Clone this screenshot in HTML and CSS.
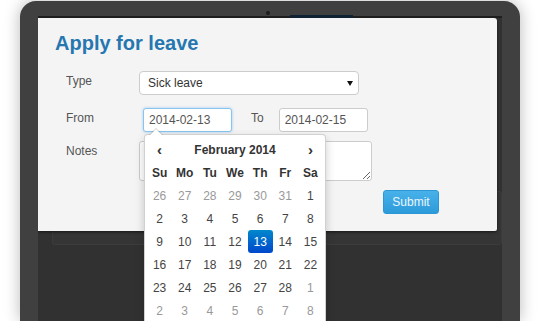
FILE: index.html
```html
<!DOCTYPE html>
<html lang="en">
<head>
  <meta charset="UTF-8">
  <title>Apply for leave</title>
  <link rel="stylesheet" href="styles.css">
</head>
<body>

  <!-- Tablet frame -->
  <div class="device">
    <span class="camera"></span>
    <span class="notch"></span>

    <div class="screen">
      <div class="panel">
        <h1 class="title">Apply for leave</h1>

        <form class="leave-form">
          <div class="row">
            <label class="label">Type</label>
            <div class="select">
              <span>Sick leave</span>
              <span class="select-arrow"></span>
            </div>
          </div>

          <div class="row row-dates">
            <label class="label">From</label>
            <div class="date-field">
              <input class="input input-focus" type="text" value="2014-02-13">

              <!-- Calendario abierto -->
              <div class="datepicker">
                <div class="dp-grid">
                  <div class="dp-nav">&lsaquo;</div>
                  <div class="dp-switch">February 2014</div>
                  <div class="dp-nav">&rsaquo;</div>

                  <div class="dp-dow">Su</div><div class="dp-dow">Mo</div><div class="dp-dow">Tu</div><div class="dp-dow">We</div><div class="dp-dow">Th</div><div class="dp-dow">Fr</div><div class="dp-dow">Sa</div>

                  <div class="dp-day old">26</div><div class="dp-day old">27</div><div class="dp-day old">28</div><div class="dp-day old">29</div><div class="dp-day old">30</div><div class="dp-day old">31</div><div class="dp-day">1</div>
                  <div class="dp-day">2</div><div class="dp-day">3</div><div class="dp-day">4</div><div class="dp-day">5</div><div class="dp-day">6</div><div class="dp-day">7</div><div class="dp-day">8</div>
                  <div class="dp-day">9</div><div class="dp-day">10</div><div class="dp-day">11</div><div class="dp-day">12</div><div class="dp-day active">13</div><div class="dp-day">14</div><div class="dp-day">15</div>
                  <div class="dp-day">16</div><div class="dp-day">17</div><div class="dp-day">18</div><div class="dp-day">19</div><div class="dp-day">20</div><div class="dp-day">21</div><div class="dp-day">22</div>
                  <div class="dp-day">23</div><div class="dp-day">24</div><div class="dp-day">25</div><div class="dp-day">26</div><div class="dp-day">27</div><div class="dp-day">28</div><div class="dp-day new">1</div>
                  <div class="dp-day new">2</div><div class="dp-day new">3</div><div class="dp-day new">4</div><div class="dp-day new">5</div><div class="dp-day new">6</div><div class="dp-day new">7</div><div class="dp-day new">8</div>
                </div>
              </div>
            </div>
            <label class="label label-to">To</label>
            <input class="input" type="text" value="2014-02-15">
          </div>

          <div class="row row-notes">
            <label class="label">Notes</label>
            <textarea class="notes"></textarea>
          </div>

          <div class="row row-actions">
            <button class="submit" type="button">Submit</button>
          </div>
        </form>
      </div>

      <!-- Tarjeta de fondo -->
      <div class="back-card"></div>
    </div>
  </div>

</body>
</html>
```

FILE: styles.css
```css
body {
  margin: 0;
  padding: 0;
  height: 321px;
  background: #fff;
  font-family: 'Liberation Sans', Arial, sans-serif;
  overflow: hidden;
}

.device {
  position: relative;
  width: 464px;
  height: 305px;
  margin: 1px 0 0 20px;
  padding: 15px 18px 0 18px;
  background: #404040;
  border-radius: 16px 16px 0 0;
  box-shadow: 0 0 16px rgba(0, 0, 0, 0.28);
}

.camera {
  position: absolute;
  left: 246px;
  top: 10px;
  width: 4px;
  height: 4px;
  border-radius: 50%;
  background: #1c1c1c;
}

.notch {
  position: absolute;
  left: 270px;
  top: 14px;
  width: 63px;
  height: 3px;
  background: #0e2233;
}

.screen {
  height: 100%;
  box-sizing: border-box;
  background: #313131;
  border-top: 2px solid #1e1e1e;
  overflow: hidden;
}

.panel {
  position: relative;
  z-index: 2;
  width: 459px;
  box-sizing: border-box;
  padding: 13px 17px 17px 17px;
  background: #f4f4f4;
  border-radius: 0 3px 2px 0;
  box-shadow: 0 1px 3px rgba(0, 0, 0, 0.6);
}

.title {
  margin: 0;
  font-size: 20px;
  line-height: 24px;
  font-weight: bold;
  color: #2677b0;
}

.leave-form {
  margin-top: 16px;
  padding-left: 11px;
}

.row {
  display: flex;
  align-items: flex-start;
}

.row-dates { margin-top: 13px; }
.row-notes { margin-top: 9px; }
.row-actions { margin-top: 9px; }

.label {
  width: 73px;
  flex-shrink: 0;
  padding-top: 2px;
  font-size: 12px;
  line-height: 16px;
  color: #555;
}

.label-to {
  width: auto;
  margin: 0 15px 0 19px;
}

.select {
  width: 220px;
  height: 24px;
  box-sizing: border-box;
  padding: 0 4px 0 8px;
  display: flex;
  align-items: center;
  justify-content: space-between;
  background: #fff;
  border: 1px solid #ccc;
  border-radius: 4px;
  font-size: 12px;
  color: #333;
}

.select-arrow {
  width: 0;
  height: 0;
  border-left: 3.5px solid transparent;
  border-right: 3.5px solid transparent;
  border-top: 5px solid #111;
  margin-right: 1px;
}

.date-field {
  position: relative;
  margin-left: 4px;
}

.input {
  display: block;
  width: 89px;
  height: 24px;
  box-sizing: border-box;
  margin: 0;
  padding: 0 5px;
  background: #fff;
  border: 1px solid #ccc;
  border-radius: 3px;
  font-family: 'Liberation Sans', Arial, sans-serif;
  font-size: 12px;
  color: #555;
  outline: none;
}

.input-focus {
  border-color: #8ac4ec;
  box-shadow: 0 0 3px rgba(102, 175, 233, 0.6);
}

.notes {
  display: block;
  width: 233px;
  height: 40px;
  box-sizing: border-box;
  margin: 0;
  background: #fff;
  border: 1px solid #ccc;
  border-radius: 3px;
  font-family: 'Liberation Sans', Arial, sans-serif;
}

.submit {
  margin-left: 317px;
  width: 56px;
  height: 24px;
  padding: 0;
  background: linear-gradient(#48b1ea, #2c9bd9);
  border: 1px solid #2b97d5;
  border-radius: 3px;
  font-family: 'Liberation Sans', Arial, sans-serif;
  font-size: 12px;
  color: #eaf6fd;
}

.datepicker {
  position: absolute;
  left: 1px;
  top: 26px;
  z-index: 10;
  padding: 3px 2px;
  background: #fff;
  border: 1px solid rgba(0, 0, 0, 0.18);
  border-radius: 4px;
  box-shadow: 0 4px 10px rgba(0, 0, 0, 0.2);
}

.datepicker::before {
  content: '';
  position: absolute;
  top: -7px;
  left: 4px;
  border-left: 7px solid transparent;
  border-right: 7px solid transparent;
  border-bottom: 7px solid rgba(0, 0, 0, 0.18);
}

.datepicker::after {
  content: '';
  position: absolute;
  top: -6px;
  left: 5px;
  border-left: 6px solid transparent;
  border-right: 6px solid transparent;
  border-bottom: 6px solid #fff;
}

.dp-grid {
  width: 176px;
  display: grid;
  grid-template-columns: repeat(7, 1fr);
  grid-auto-rows: 23px;
  font-size: 12px;
  color: #444;
  text-align: center;
}

.dp-grid > div {
  display: flex;
  align-items: center;
  justify-content: center;
}

.dp-nav {
  font-size: 15px;
  font-weight: bold;
  color: #333;
}

.dp-switch {
  grid-column: span 5;
  font-weight: bold;
  color: #333;
}

.dp-dow {
  font-weight: bold;
  color: #333;
}

.dp-day.old,
.dp-day.new { color: #999; }

.dp-day.active {
  background: linear-gradient(#0088cc, #0047cc);
  border-radius: 3px;
  color: #fff;
}

.back-card {
  height: 52px;
  margin: -40px 0 0 14px;
  background: #353535;
  border: 1px solid #3c3c3c;
  border-radius: 3px;
}
```
